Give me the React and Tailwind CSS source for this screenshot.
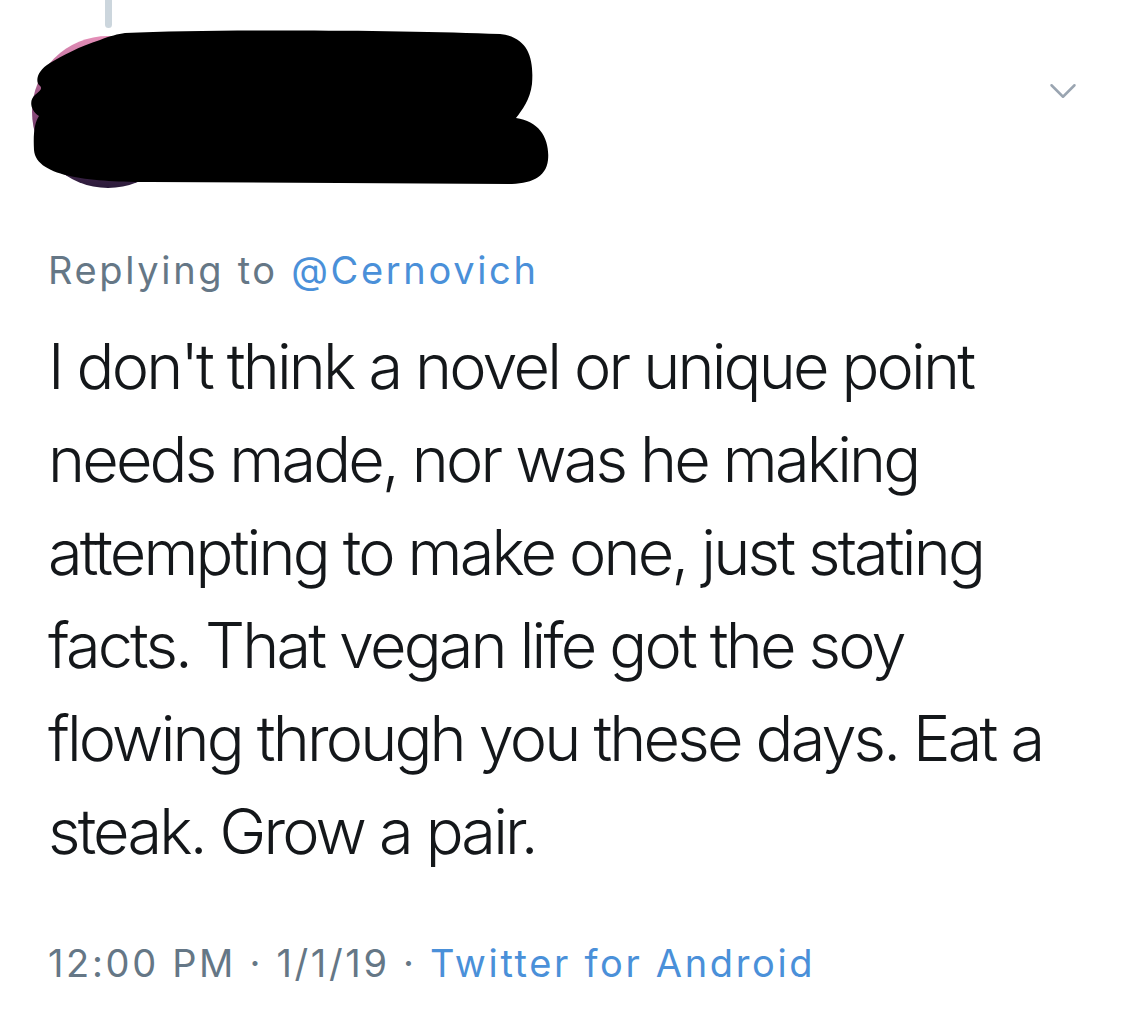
import { ChevronDown } from 'lucide-react';

const lines = [
  "I don't think a novel or unique point",
  'needs made, nor was he making',
  'attempting to make one, just stating',
  'facts. That vegan life got the soy',
  'flowing through you these days. Eat a',
  'steak. Grow a pair.',
];

const Redaction = () => (
  <svg className="absolute inset-0" width="600" height="220" viewBox="0 0 600 220">
    <defs>
      <linearGradient id="av" x1="0" y1="0" x2="0" y2="1">
        <stop offset="0" stopColor="#e58fb8" />
        <stop offset="0.5" stopColor="#8a4a7a" />
        <stop offset="1" stopColor="#2a1a3a" />
      </linearGradient>
    </defs>
    {/* avatar peeking out from behind the scribble */}
    <circle cx="108" cy="112" r="76" fill="url(#av)" />
    {/* marker scribble */}
    <path
      d="M 125 33 C 220 29, 400 30, 500 34 C 528 37, 534 58, 532 84 C 530 100, 522 110, 516 118 C 540 121, 550 140, 548 160 C 546 178, 530 184, 508 184 L 150 182 C 95 182, 36 178, 34 150 C 33 132, 35 122, 39 116 C 30 110, 29 100, 35 95 C 41 90, 43 88, 39 85 C 35 80, 38 70, 50 63 C 62 56, 80 46, 100 40 C 110 36, 118 34, 125 33 Z"
      fill="#000"
    />
  </svg>
);

export default function App() {
  return (
    <div className="w-[1124px] min-h-[1021px] bg-white" style={{ fontFamily: 'Inter, "Noto Sans", sans-serif' }}>
      {/* Header */}
      <div className="relative h-[247px]">
        <div className="absolute left-[105px] top-0 w-[7px] h-[28px] rounded-b-full bg-[#ccd6dd]" />
        <Redaction />
        <ChevronDown className="absolute left-[1040px] top-[68px] w-[46px] h-[46px] text-[#9aa5b1]" strokeWidth={1.3} />
      </div>

      <div className="pl-[48px] pr-[40px]">
        <p className="text-[38px] leading-[46px] text-[#657786] tracking-[0.07em]">
          Replying to <span className="text-[#4a90d9]">@Cernovich</span>
        </p>

        <p className="mt-[27px] text-[63px] leading-[93px] font-light text-[#14171a] tracking-[-0.045em]">
          {lines.map((l, i) => (
            <span key={i} className="block whitespace-nowrap">{l}</span>
          ))}
        </p>

        <p className="mt-[62px] text-[38px] leading-[46px] text-[#657786] tracking-[0.07em]">
          12:00 PM · 1/1/19 · <span className="text-[#4a90d9]">Twitter for Android</span>
        </p>
      </div>
    </div>
  );
}
